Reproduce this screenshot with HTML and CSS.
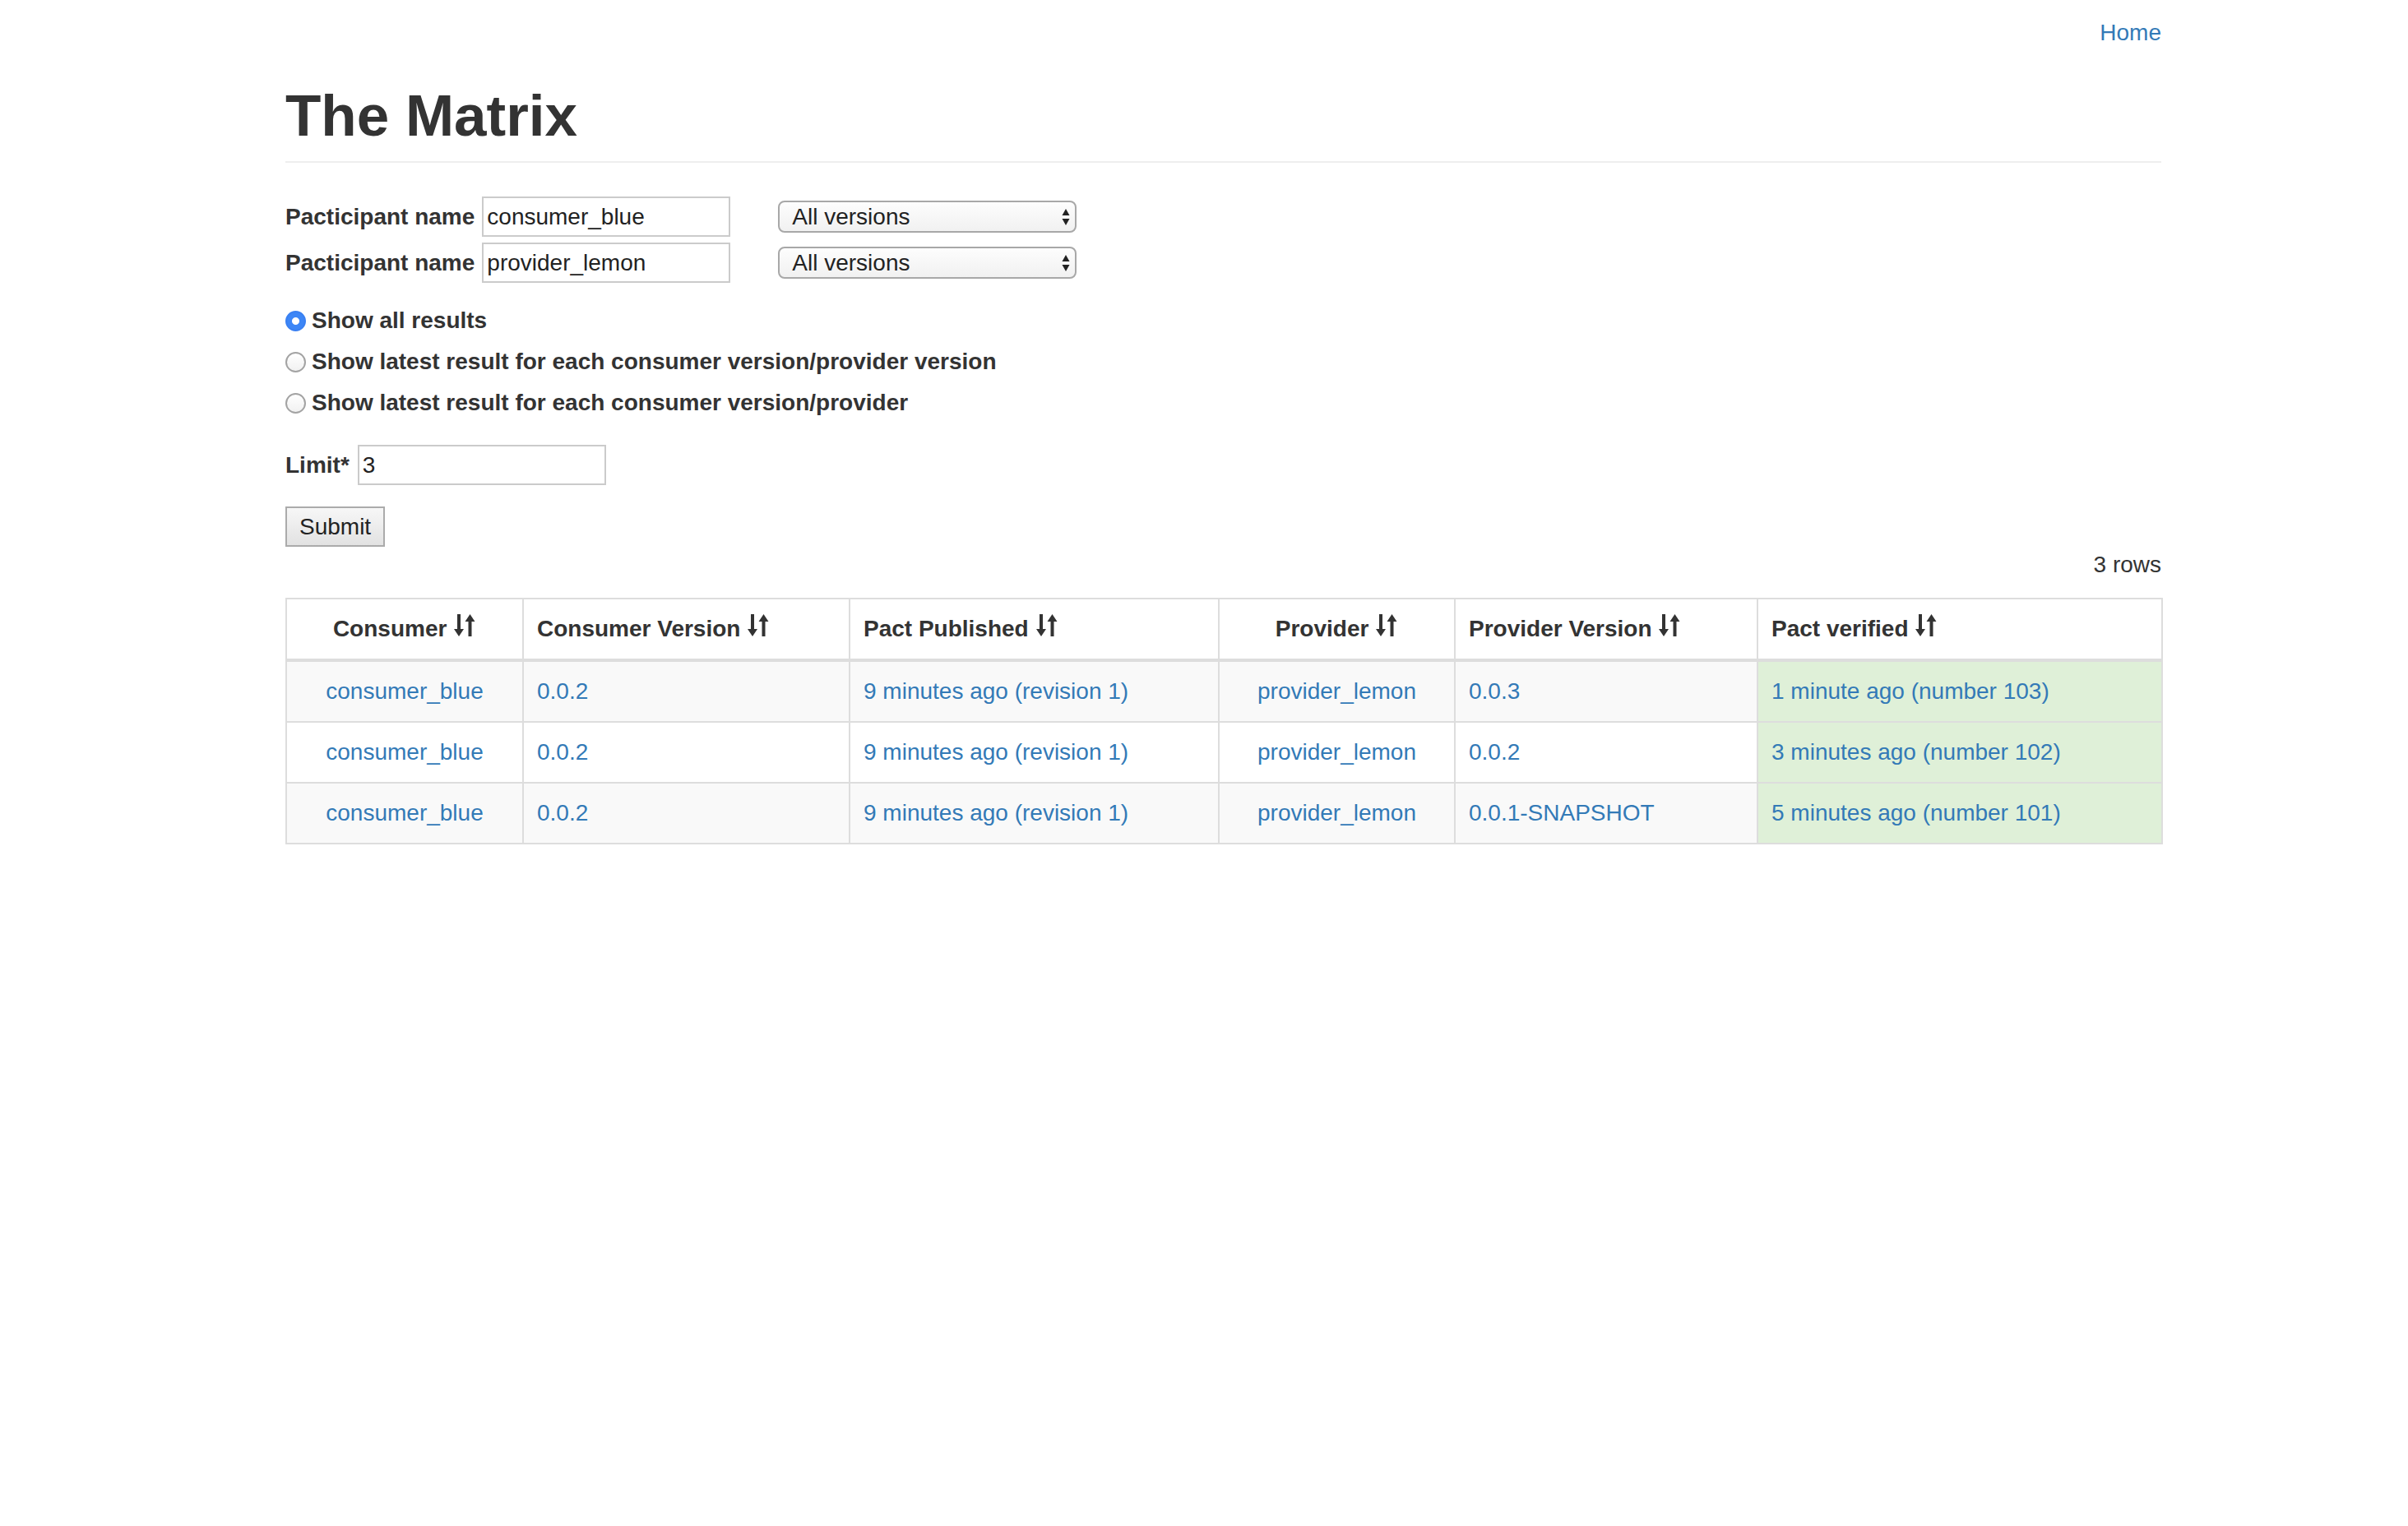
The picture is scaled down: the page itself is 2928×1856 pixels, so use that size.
FILE: index.html
```html
<!DOCTYPE html>
<html>
<head>
<meta charset="utf-8">
<title>The Matrix</title>
<link rel="stylesheet" href="styles.css">
</head>
<body>
<div class="container">
  <nav class="topnav"><a href="#" class="link">Home</a></nav>
  <div class="page-header"><h1 class="title">The Matrix</h1></div>

  <form class="matrix-form">
    <div class="form-row">
      <label class="field-label">Pacticipant name</label>
      <input class="text-input" type="text" value="consumer_blue">
      <span class="select-wrap">
        <select class="select"><option>All versions</option></select>
        <svg class="select-arrows" width="10" height="22" viewBox="0 0 10 22"><path d="M5 1 L9.5 9 L0.5 9 Z M0.5 13 L9.5 13 L5 21 Z" fill="#222"/></svg>
      </span>
    </div>
    <div class="form-row">
      <label class="field-label">Pacticipant name</label>
      <input class="text-input" type="text" value="provider_lemon">
      <span class="select-wrap">
        <select class="select"><option>All versions</option></select>
        <svg class="select-arrows" width="10" height="22" viewBox="0 0 10 22"><path d="M5 1 L9.5 9 L0.5 9 Z M0.5 13 L9.5 13 L5 21 Z" fill="#222"/></svg>
      </span>
    </div>

    <div class="radios">
      <label class="radio-row"><input class="radio" type="radio" name="mode" checked>Show all results</label>
      <label class="radio-row"><input class="radio" type="radio" name="mode">Show latest result for each consumer version/provider version</label>
      <label class="radio-row"><input class="radio" type="radio" name="mode">Show latest result for each consumer version/provider</label>
    </div>

    <div class="form-row limit-row">
      <label class="field-label">Limit*</label>
      <input class="text-input limit-input" type="text" value="3">
    </div>

    <div class="submit-row"><button class="submit" type="button">Submit</button></div>
  </form>

  <div class="rowcount">3 rows</div>

  <table class="matrix">
    <colgroup>
      <col class="c-consumer"><col class="c-cver"><col class="c-pub"><col class="c-provider"><col class="c-pver"><col class="c-verified">
    </colgroup>
    <thead>
      <tr>
        <th class="center">Consumer <svg class="sort" width="28" height="27" viewBox="0 0 28 27"><path d="M5 0 H9 V18 H13 L7 27 L1 18 H5 Z M18.5 27 H22.5 V9 H26.5 L20.5 0 L14.5 9 H18.5 Z" fill="#333"/></svg></th>
        <th>Consumer Version <svg class="sort" width="28" height="27" viewBox="0 0 28 27"><path d="M5 0 H9 V18 H13 L7 27 L1 18 H5 Z M18.5 27 H22.5 V9 H26.5 L20.5 0 L14.5 9 H18.5 Z" fill="#333"/></svg></th>
        <th>Pact Published <svg class="sort" width="28" height="27" viewBox="0 0 28 27"><path d="M5 0 H9 V18 H13 L7 27 L1 18 H5 Z M18.5 27 H22.5 V9 H26.5 L20.5 0 L14.5 9 H18.5 Z" fill="#333"/></svg></th>
        <th class="center">Provider <svg class="sort" width="28" height="27" viewBox="0 0 28 27"><path d="M5 0 H9 V18 H13 L7 27 L1 18 H5 Z M18.5 27 H22.5 V9 H26.5 L20.5 0 L14.5 9 H18.5 Z" fill="#333"/></svg></th>
        <th>Provider Version <svg class="sort" width="28" height="27" viewBox="0 0 28 27"><path d="M5 0 H9 V18 H13 L7 27 L1 18 H5 Z M18.5 27 H22.5 V9 H26.5 L20.5 0 L14.5 9 H18.5 Z" fill="#333"/></svg></th>
        <th>Pact verified <svg class="sort" width="28" height="27" viewBox="0 0 28 27"><path d="M5 0 H9 V18 H13 L7 27 L1 18 H5 Z M18.5 27 H22.5 V9 H26.5 L20.5 0 L14.5 9 H18.5 Z" fill="#333"/></svg></th>
      </tr>
    </thead>
    <tbody>
      <tr class="odd">
        <td class="center"><a href="#" class="link">consumer_blue</a></td>
        <td><a href="#" class="link">0.0.2</a></td>
        <td><a href="#" class="link">9 minutes ago (revision 1)</a></td>
        <td class="center"><a href="#" class="link">provider_lemon</a></td>
        <td><a href="#" class="link">0.0.3</a></td>
        <td class="success"><a href="#" class="link">1 minute ago (number 103)</a></td>
      </tr>
      <tr>
        <td class="center"><a href="#" class="link">consumer_blue</a></td>
        <td><a href="#" class="link">0.0.2</a></td>
        <td><a href="#" class="link">9 minutes ago (revision 1)</a></td>
        <td class="center"><a href="#" class="link">provider_lemon</a></td>
        <td><a href="#" class="link">0.0.2</a></td>
        <td class="success"><a href="#" class="link">3 minutes ago (number 102)</a></td>
      </tr>
      <tr class="odd">
        <td class="center"><a href="#" class="link">consumer_blue</a></td>
        <td><a href="#" class="link">0.0.2</a></td>
        <td><a href="#" class="link">9 minutes ago (revision 1)</a></td>
        <td class="center"><a href="#" class="link">provider_lemon</a></td>
        <td><a href="#" class="link">0.0.1-SNAPSHOT</a></td>
        <td class="success"><a href="#" class="link">5 minutes ago (number 101)</a></td>
      </tr>
    </tbody>
  </table>
</div>
</body>
</html>
```
FILE: styles.css
```css
* { box-sizing: border-box; }

html, body {
  margin: 0;
  padding: 0;
  background: #fff;
}

body {
  font-family: "Liberation Sans", Arial, sans-serif;
  font-size: 28px;
  line-height: 40px;
  color: #333;
}

.container {
  width: 2281px;
  margin-left: 347px;
}

.link {
  color: #337ab7;
  text-decoration: none;
}

.topnav {
  padding-top: 21px;
  height: 59px;
  line-height: 38px;
  text-align: right;
}

.page-header {
  padding-bottom: 16px;
  border-bottom: 2px solid #eee;
  margin-top: 42px;
}

.title {
  margin: 0;
  font-size: 71px;
  line-height: 79px;
  font-weight: bold;
  color: #333;
}

.matrix-form {
  margin-top: 41px;
}

.form-row {
  display: flex;
  align-items: center;
  height: 49px;
  margin-bottom: 7px;
}

.field-label {
  font-weight: bold;
}

.text-input {
  margin-left: 9px;
  width: 302px;
  height: 49px;
  border: 2px solid #cbcbcb;
  padding: 0 4px;
  font-family: inherit;
  font-size: 28px;
  color: #222;
  background: #fff;
  outline: none;
}

.select-wrap {
  position: relative;
  margin-left: 58px;
  display: inline-block;
  height: 39px;
}

.select {
  -webkit-appearance: none;
  appearance: none;
  width: 363px;
  height: 39px;
  border: 2px solid #a8a8a8;
  border-radius: 8px;
  background: linear-gradient(#fdfdfd, #f1f1f1);
  font-family: inherit;
  font-size: 28px;
  color: #222;
  padding: 0 0 0 15px;
  margin: 0;
}

.select-arrows {
  position: absolute;
  right: 8px;
  top: 9px;
  pointer-events: none;
}

.radios {
  margin-top: 21px;
}

.radio-row {
  display: flex;
  align-items: center;
  height: 50px;
  font-weight: bold;
}

.radio {
  -webkit-appearance: none;
  appearance: none;
  width: 25px;
  height: 25px;
  margin: 0 7px 0 0;
  border-radius: 50%;
  border: 2px solid #a3a3a3;
  background: linear-gradient(#ffffff, #f1f1f1);
}

.radio:checked {
  border-color: #3a80f2;
  background: radial-gradient(circle, #fff 0, #fff 4px, #3d86f6 5px);
}

.limit-row {
  margin-top: 26px;
  margin-bottom: 0;
}

.limit-input {
  margin-left: 10px;
}

.submit-row {
  margin-top: 26px;
  height: 49px;
}

.submit {
  height: 49px;
  padding: 0 15px;
  border: 2px solid #ababab;
  background: linear-gradient(#f7f7f7, #e2e2e2);
  font-family: inherit;
  font-size: 28px;
  color: #222;
  border-radius: 0;
}

.rowcount {
  text-align: right;
  height: 40px;
  margin-top: 2px;
  margin-bottom: 20px;
}

.matrix {
  width: 2281px;
  table-layout: fixed;
  border-collapse: collapse;
  border: 2px solid #ddd;
}

.c-consumer { width: 288px; }
.c-cver { width: 397px; }
.c-pub { width: 449px; }
.c-provider { width: 287px; }
.c-pver { width: 368px; }
.c-verified { width: 492px; }

.matrix th,
.matrix td {
  border: 2px solid #ddd;
  padding: 16px;
  line-height: 40px;
  text-align: left;
  white-space: nowrap;
}

.matrix th {
  font-weight: bold;
  vertical-align: bottom;
  border-bottom-width: 4px;
}

.matrix .center {
  text-align: center;
}

.sort {
  vertical-align: baseline;
}

.matrix tr.odd td {
  background: #f9f9f9;
}

.matrix tr td.success {
  background: #dff0d8;
}
```
